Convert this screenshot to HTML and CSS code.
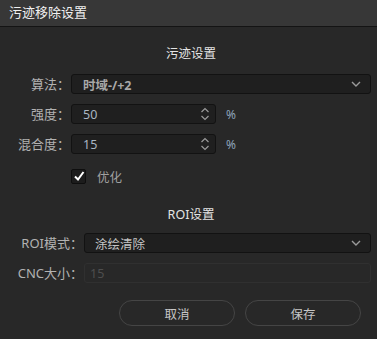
FILE: index.html
```html
<!DOCTYPE html>
<html lang="zh">
<head>
    <meta charset="UTF-8">
    <title>污迹移除设置</title>
    <link rel="stylesheet" href="styles.css">
</head>
<body>
    <div class="dialog">
        <div class="titlebar">污迹移除设置</div>

        <div class="content">
            <h2 class="group-title">污迹设置</h2>
            <div class="form form-stain">
                <label>算法：</label>
                <div class="combo bold">
                    <span>时域-/+2</span>
                    <svg class="chev" width="10" height="6" viewBox="0 0 10 6"><path d="M1 1 L5 5 L9 1" fill="none" stroke="#9a9a9a" stroke-width="1.4"/></svg>
                </div>

                <label>强度：</label>
                <div class="spin-row">
                    <div class="spin">
                        <span class="value">50</span>
                        <svg width="10" height="14" viewBox="0 0 10 14"><path d="M1.5 5 L5 1.5 L8.5 5 M1.5 9 L5 12.5 L8.5 9" fill="none" stroke="#9a9a9a" stroke-width="1.2"/></svg>
                    </div>
                    <span class="unit">%</span>
                </div>

                <label>混合度：</label>
                <div class="spin-row">
                    <div class="spin">
                        <span class="value">15</span>
                        <svg width="10" height="14" viewBox="0 0 10 14"><path d="M1.5 5 L5 1.5 L8.5 5 M1.5 9 L5 12.5 L8.5 9" fill="none" stroke="#9a9a9a" stroke-width="1.2"/></svg>
                    </div>
                    <span class="unit">%</span>
                </div>

                <span></span>
                <div class="check-row">
                    <span class="checkbox">
                        <svg width="12" height="12" viewBox="0 0 12 12"><path d="M2 6.5 L5 9.5 L10.5 2" fill="none" stroke="#ffffff" stroke-width="2"/></svg>
                    </span>
                    <span class="check-label">优化</span>
                </div>
            </div>

            <h2 class="group-title roi-title">ROI设置</h2>
            <div class="form form-roi">
                <label>ROI模式：</label>
                <div class="combo">
                    <span class="plain">涂绘清除</span>
                    <svg class="chev" width="10" height="6" viewBox="0 0 10 6"><path d="M1 1 L5 5 L9 1" fill="none" stroke="#9a9a9a" stroke-width="1.4"/></svg>
                </div>

                <label>CNC大小：</label>
                <div class="input disabled">15</div>
            </div>

            <div class="buttons">
                <button class="btn">取消</button>
                <button class="btn">保存</button>
            </div>
        </div>
    </div>
</body>
</html>
```

FILE: styles.css
```css
:root {
    --bg: #282828;
    --title-bg: #373737;
    --field-bg: #1f1f1f;
    --field-border: #121212;
    --label: #b2b2b2;
    --value: #aab6c2;
}

* {
    box-sizing: border-box;
}

body {
    margin: 0;
    background: var(--bg);
    font-family: "Noto Sans", "Noto Sans CJK SC", sans-serif;
    font-size: 13px;
    color: var(--label);
}

.dialog {
    width: 377px;
    height: 339px;
    overflow: hidden;
}

.titlebar {
    height: 27px;
    background: var(--title-bg);
    border-bottom: 1px solid #141414;
    color: #f0f0f0;
    font-size: 13px;
    line-height: 25px;
    padding-left: 9px;
}

.content {
    padding: 0 6px 0 9px;
}

.group-title {
    margin: 0;
    font-weight: normal;
    font-size: 12.5px;
    color: #e4e4e4;
    text-align: center;
    padding-left: 2px;
    height: 18px;
    line-height: 18px;
    margin-top: 18px;
    margin-bottom: 11px;
}

.roi-title {
    margin-top: 22px;
    margin-bottom: 9px;
}

.form {
    display: grid;
    row-gap: 10px;
    align-items: center;
}

.form-stain {
    grid-template-columns: 62px 1fr;
    grid-auto-rows: 20px;
}

.form-roi {
    grid-template-columns: 75px 1fr;
    grid-auto-rows: 20px;
}

label {
    text-align: right;
    padding-right: 1px;
    white-space: nowrap;
    line-height: 20px;
}

.combo,
.spin,
.input {
    height: 20px;
    background: var(--field-bg);
    border: 1px solid var(--field-border);
    border-radius: 3px;
    display: flex;
    align-items: center;
    justify-content: space-between;
    padding: 0 9px 0 11px;
    font-size: 12.5px;
}

.combo.bold span {
    font-weight: bold;
    color: #a8a8a8;
}

.combo .plain {
    color: #c4c4c4;
    margin-left: -1px;
}

.spin-row {
    display: flex;
    align-items: center;
}

.spin {
    width: 145px;
    padding-right: 5px;
}

.value {
    color: var(--value);
}

.unit {
    margin-left: 10px;
    color: #8ea4bc;
    font-size: 12px;
}

.check-row {
    display: flex;
    align-items: center;
    height: 15px;
    margin-top: 4px;
}

.checkbox {
    width: 15px;
    height: 15px;
    background: #1c1c1c;
    border: 1px solid #0e0e0e;
    border-radius: 2px;
    display: flex;
    align-items: center;
    justify-content: center;
}

.check-label {
    margin-left: 11px;
    color: #a0a0a0;
    font-size: 12.5px;
}

.input.disabled {
    background: var(--bg);
    border-color: #303030;
    color: #4e4e4e;
    padding-left: 5px;
}

.buttons {
    display: flex;
    justify-content: flex-end;
    gap: 10px;
    margin-top: 17px;
    padding-right: 10px;
}

.btn {
    width: 116px;
    height: 26px;
    border-radius: 13px;
    background: var(--bg);
    border: 1px solid #454545;
    color: #c6c6c6;
    font-family: "Noto Sans CJK SC", sans-serif;
    font-size: 12.5px;
    padding: 0;
}
```
